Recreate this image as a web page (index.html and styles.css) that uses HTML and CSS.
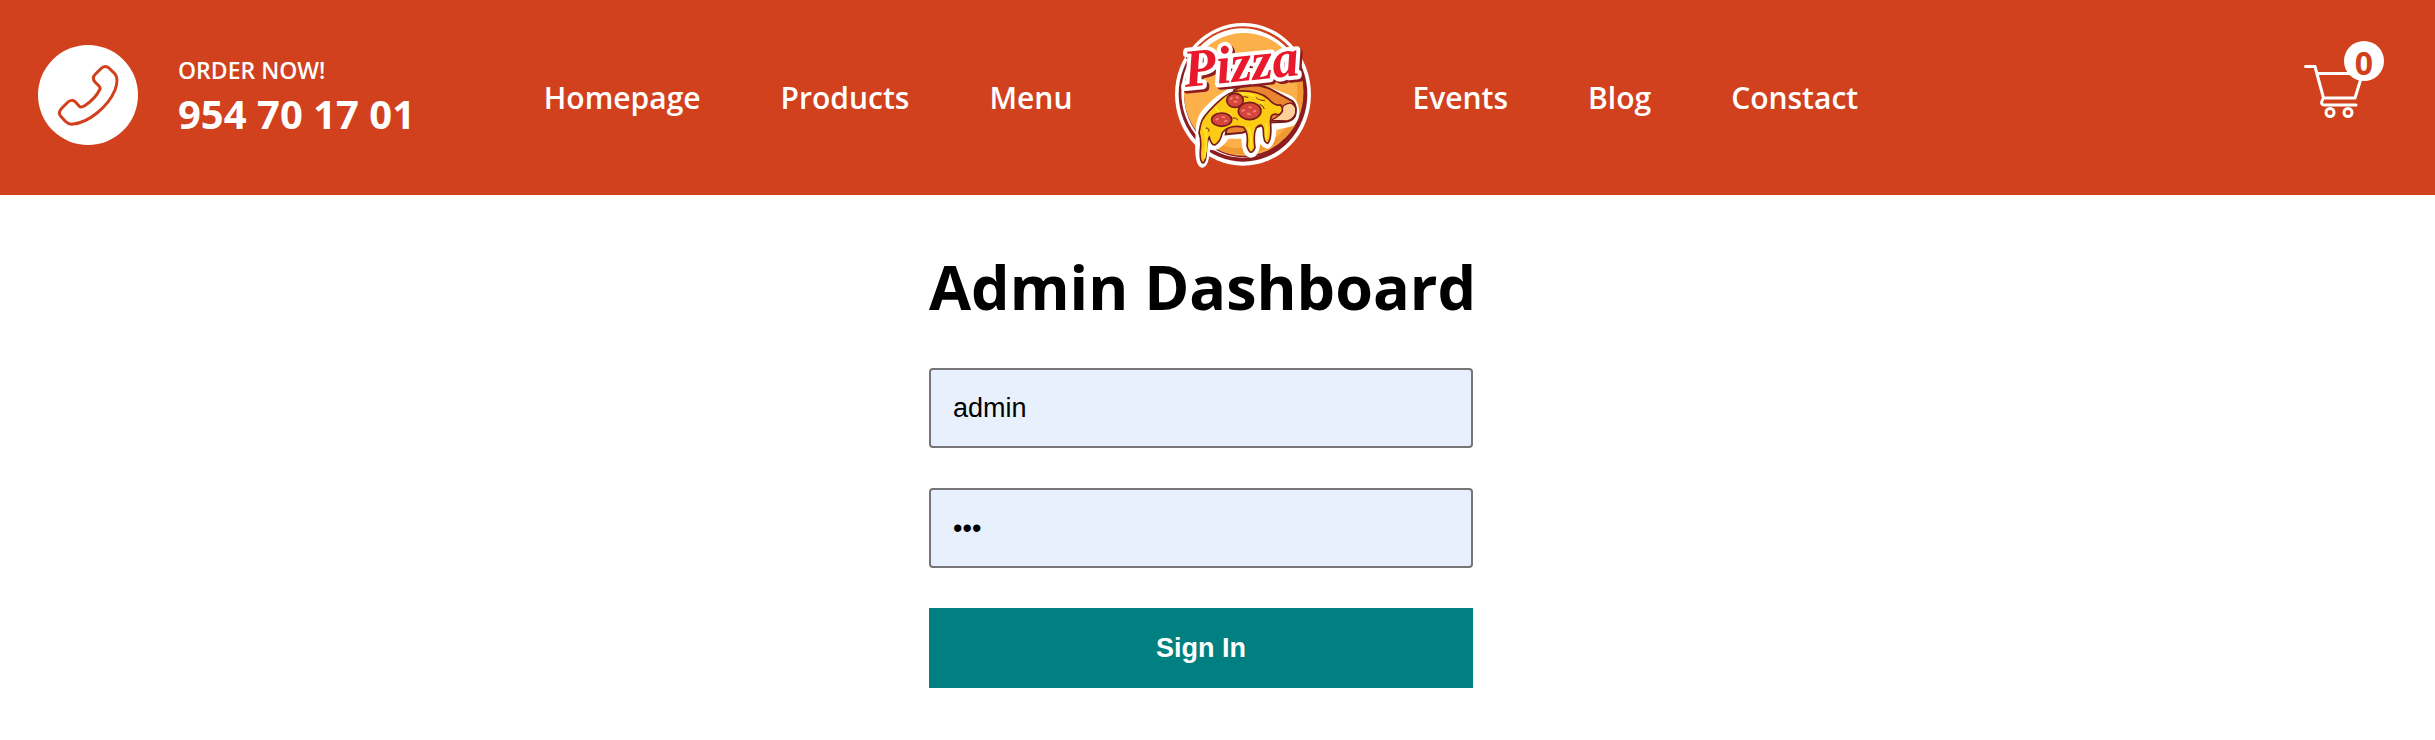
FILE: index.html
```html
<!DOCTYPE html>
<html lang="en">
<head>
<meta charset="utf-8">
<title>Admin Dashboard</title>
<link rel="stylesheet" href="styles.css">
</head>
<body>
<header class="header">
  <div class="call">
    <span class="call-icon">
      <svg class="phone" viewBox="0 0 60 60" aria-hidden="true"><path d="M43.500 3.200Q48 -.5 52 4L57 9Q61 14 57 25C50 42 30 58 15 59Q11 60 7 56L3 51.500Q-.5 48 3.500 43.500L9 38Q14 33 18 37.500L21 41Q23 43.200 27 40.500Q37 34 41.500 25Q43 23 41 21L37 17Q33.500 13 37.500 9Z"/></svg>
    </span>
    <div class="call-texts">
      <div class="call-label">ORDER NOW!</div>
      <div class="call-number">954 70 17 01</div>
    </div>
  </div>
  <nav class="nav">
    <a class="nav-link" href="#">Homepage</a>
    <a class="nav-link" href="#">Products</a>
    <a class="nav-link" href="#">Menu</a>
    <a class="logo-link" href="#">
      <svg class="logo" viewBox="45 33 414 441" role="img" aria-label="Pizza">
        <ellipse cx="252" cy="250" rx="204" ry="214" fill="#fff"/>
        <ellipse cx="252" cy="250" rx="193" ry="202" fill="#8c1c1f"/>
        <path d="M76 165A193 202 0 0 1 410 132L380 125A175 180 0 0 0 110 130Z" fill="#d1411e"/>
        <ellipse cx="250" cy="246" rx="183" ry="194" fill="#fff"/>
        <ellipse cx="256" cy="249" rx="181" ry="190" fill="#8c1c1f"/>
        <ellipse cx="254" cy="246" rx="179" ry="188" fill="#fbb04a"/>
        <path d="M118 128A179 188 0 0 1 384 118" fill="none" stroke="#fff" stroke-width="10"/>
        <path d="M405 160Q445 240 400 340Q340 428 225 420Q190 415 170 400" fill="none" stroke="#f19a33" stroke-width="18"/>
        <path class="slice-outline" d="M120 340C125 310 145 290 175 265L215 238L300 225L385 258C418 270 420 320 398 338L345 350Q342 400 325 405Q305 400 304 362L296 365Q300 430 275 432Q255 430 255 375L205 375Q185 405 165 410Q148 405 145 415Q142 460 130 462Q110 460 120 340Z"/>
        <path d="M225 238Q270 210 330 232L400 270Q416 285 408 315Q400 330 380 332L330 335L250 365L200 370Z" fill="#e98431" stroke="#7a1b1b" stroke-width="6"/>
        <path d="M372 285Q400 265 410 292Q414 320 385 330L335 328Q370 315 372 285Z" fill="#fccf9b" stroke="#7a1b1b" stroke-width="4"/>
        <path d="M125 340C130 315 160 290 175 275Q210 240 240 240Q300 238 330 265Q345 285 365 282Q378 300 360 312Q330 300 335 340Q338 385 326 397Q312 395 313 355Q308 332 292 350Q282 370 288 410Q275 440 264 405Q269 360 252 348Q210 340 190 365Q184 393 169 401Q157 405 151 379Q144 388 142 420Q142 448 133 456Q122 455 124 420Q128 385 120 365Z" fill="#fccb13" stroke="#7a1b1b" stroke-width="5"/>
        <path d="M135 350Q150 385 136 440M267 350Q280 370 275 412M322 340V380M170 290Q190 325 215 310M240 250Q285 240 310 278" fill="none" stroke="#ffe32b" stroke-width="7" stroke-linecap="round"/>
        <g fill="#d6453b" stroke="#7a1b1b" stroke-width="5">
          <ellipse cx="228" cy="268" rx="25" ry="21"/>
          <ellipse cx="272" cy="300" rx="34" ry="26"/>
          <ellipse cx="188" cy="326" rx="30" ry="20"/>
        </g>
        <path d="M215 264l4-3M232 258l5 2M226 272l7 1M250 300l6-3M270 288l6 1M284 302l6-3M266 308l7 2M172 326l5-3M190 318l6 1M198 331l5-2" stroke="#f18a78" stroke-width="5" stroke-linecap="round"/>
        <path d="M290 258Q300 270 318 268M302 280Q312 282 316 294M140 352Q150 348 150 362M220 322Q232 318 236 328M245 262Q258 252 268 260" fill="none" stroke="#7a1b1b" stroke-width="3"/>
        <g transform="rotate(-6 250 180)">
          <text class="logo-text logo-shadow" x="81" y="218">Pizza</text>
          <text class="logo-text logo-edge" x="75" y="210">Pizza</text>
          <text class="logo-text" x="75" y="210">Pizza</text>
        </g>
      </svg>
    </a>
    <a class="nav-link" href="#">Events</a>
    <a class="nav-link" href="#">Blog</a>
    <a class="nav-link" href="#">Constact</a>
  </nav>
  <a class="cart" href="#" aria-label="Cart">
    <svg class="cart-icon" viewBox="0 0 60 60" aria-hidden="true"><path d="M1.500 5.500H11L19.500 37H51L58.500 12.500H13M19.500 37Q15 44 21 44H52"/><circle cx="26" cy="51.500" r="4"/><circle cx="44" cy="51.500" r="4"/></svg>
    <span class="cart-count">0</span>
  </a>
</header>
<main class="main">
  <form class="login">
    <h1 class="title">Admin Dashboard</h1>
    <input class="field" type="text" value="admin" aria-label="Username">
    <input class="field" type="password" value="123" aria-label="Password">
    <button class="submit" type="button">Sign In</button>
  </form>
</main>
</body>
</html>
```

FILE: styles.css
```css
:root {
  --brand: #d1411e;
  --gutter: 33px;
}

* {
  box-sizing: border-box;
}

body {
  margin: 0;
  background: #fff;
  color: #000;
  font-family: "Segoe UI", "Open Sans", "Noto Sans", sans-serif;
}

.header {
  display: grid;
  grid-template-columns: 1fr auto 1fr;
  align-items: center;
  min-height: 195px;
  padding: 0 calc(38px + var(--gutter)) 5px 38px;
  background: var(--brand);
  color: #fff;
}

.call {
  display: flex;
  align-items: center;
  gap: 40px;
}

.call-icon {
  display: flex;
  align-items: center;
  justify-content: center;
  width: 100px;
  height: 100px;
  border-radius: 50%;
  background: #fff;
}

.phone {
  width: 60px;
  height: 60px;
  overflow: visible;
  fill: none;
  stroke: var(--brand);
  stroke-width: 3;
}

.call-texts {
  padding-top: 6px;
}

.call-label {
  font-size: 23px;
  line-height: 32px;
  font-weight: 600;
}

.call-number {
  font-size: 40px;
  line-height: 56px;
  font-weight: 700;
}

.nav {
  display: flex;
  align-items: center;
  gap: 80px;
}

.nav-link {
  padding-top: 6px;
  color: inherit;
  font-size: 30px;
  line-height: 44px;
  font-weight: 600;
  text-decoration: none;
}

.logo-link {
  display: block;
  margin: 0 20px 0 22px;
}

.logo {
  display: block;
  width: 138px;
  height: 147px;
}

.slice-outline {
  fill: #fff;
  stroke: #fff;
  stroke-width: 16;
  stroke-linejoin: round;
}

.logo-text {
  fill: #e8192c;
  font-family: "Liberation Serif", serif;
  font-size: 160px;
  font-style: italic;
  font-weight: 700;
}

.logo-edge {
  fill: #fff;
  stroke: #fff;
  stroke-width: 24;
  stroke-linejoin: round;
}

.logo-shadow {
  fill: #8c1c1f;
  stroke: #8c1c1f;
  stroke-width: 24;
  stroke-linejoin: round;
}

.cart {
  position: relative;
  justify-self: end;
  margin-bottom: 8px;
  color: inherit;
  text-decoration: none;
}

.cart-icon {
  display: block;
  width: 60px;
  height: 60px;
  fill: none;
  stroke: #fff;
  stroke-width: 3;
  stroke-linecap: round;
  stroke-linejoin: round;
}

.cart-count {
  position: absolute;
  top: -20px;
  right: -20px;
  display: flex;
  align-items: center;
  justify-content: center;
  width: 40px;
  height: 40px;
  padding-top: 4px;
  border-radius: 50%;
  background: #fff;
  color: var(--brand);
  font-size: 32px;
  line-height: 40px;
  font-weight: 700;
}

.main {
  display: flex;
  justify-content: center;
  padding: 50px var(--gutter) 52px 0;
}

.login {
  display: flex;
  flex-direction: column;
  gap: 40px;
  width: 544px;
}

.title {
  margin: 0;
  font-size: 61px;
  line-height: 83px;
  font-weight: 700;
  text-align: center;
  white-space: nowrap;
}

.field {
  width: 100%;
  height: 80px;
  padding: 0 22px;
  border: 2px solid #767676;
  border-radius: 4px;
  background: #e8f0fe;
  color: #000;
  font-family: Arial, "Liberation Sans", sans-serif;
  font-size: 27px;
}

.submit {
  height: 80px;
  border: 0;
  background: #008080;
  color: #fff;
  font-family: Arial, "Liberation Sans", sans-serif;
  font-size: 27px;
  font-weight: 700;
  cursor: pointer;
}
```
